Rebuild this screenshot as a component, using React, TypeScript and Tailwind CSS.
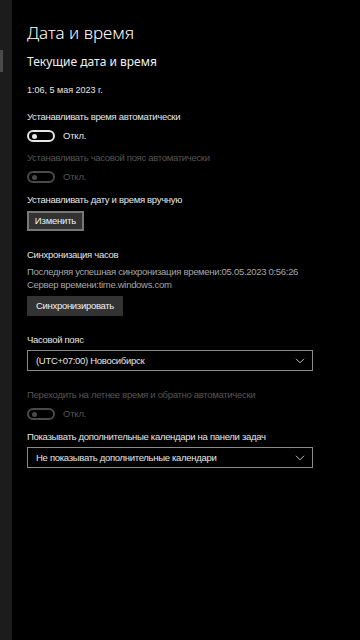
import React from "react";

const body = { fontFamily: '"Liberation Sans Narrow", "Liberation Sans", sans-serif' };
const head = { fontFamily: '"Noto Sans", "Open Sans", sans-serif' };

function Toggle({ disabled }: { disabled?: boolean }) {
  return (
    <div className="flex items-center gap-[8px] h-[14px]">
      <div
        className={
          "w-[28px] h-[12px] rounded-full border-[2px] flex items-center pl-[3px] " +
          (disabled ? "border-[#4a4a4a]" : "border-[#e6e6e6]")
        }
      >
        <div
          className={
            "w-[5px] h-[5px] rounded-full " +
            (disabled ? "bg-[#4a4a4a]" : "bg-[#e6e6e6]")
          }
        />
      </div>
      <span
        className={
          "text-[9.5px] leading-[14px] tracking-[-0.2px] " +
          (disabled ? "text-[#555555]" : "text-[#e6e6e6]")
        }
      >
        Откл.
      </span>
    </div>
  );
}

function Chevron() {
  return (
    <svg width="10" height="6" viewBox="0 0 10 6" fill="none">
      <path d="M1 0.8 L5 4.8 L9 0.8" stroke="#bdbdbd" strokeWidth="1" />
    </svg>
  );
}

function Select({ text }: { text: string }) {
  return (
    <div className="w-[286px] h-[21px] border border-[#8a8a8a] flex items-center justify-between pl-[8px] pr-[7px]">
      <span className="text-[9.5px] leading-[14px] tracking-[-0.3px] text-[#e6e6e6]">{text}</span>
      <Chevron />
    </div>
  );
}

function Label({ children, dim }: { children: React.ReactNode; dim?: boolean }) {
  return (
    <div
      className={
        "h-[14px] text-[9.5px] leading-[14px] tracking-[-0.3px] whitespace-nowrap " +
        (dim ? "text-[#555555]" : "text-[#e6e6e6]")
      }
    >
      {children}
    </div>
  );
}

export default function App() {
  return (
    <div className="w-[360px] h-[640px] bg-black flex overflow-hidden" style={body}>
      <div className="w-[12px] h-full bg-[#1c1c1c] relative shrink-0">
        <div className="absolute left-0 top-[50px] w-[3px] h-[22px] bg-[#4a4a4a]" />
      </div>
      <div className="flex-1 pl-[15px] pt-[20px] flex flex-col">
        <div className="h-[26px] text-[17px] leading-[26px] font-light text-white" style={head}>Дата и время</div>
        <div className="mt-[7px] h-[18px] text-[12px] leading-[18px] text-[#f0f0f0]" style={head}>Текущие дата и время</div>
        <div className="mt-[12px] h-[14px] text-[9px] leading-[14px] text-[#e6e6e6]">1:06, 5 мая 2023 г.</div>
        <div className="mt-[13px]"><Label>Устанавливать время автоматически</Label></div>
        <div className="mt-[5px]"><Toggle /></div>
        <div className="mt-[8px]"><Label dim>Устанавливать часовой пояс автоматически</Label></div>
        <div className="mt-[5px]"><Toggle disabled /></div>
        <div className="mt-[9px]"><Label>Устанавливать дату и время вручную</Label></div>
        <div className="mt-[4px] flex">
          <div className="h-[20px] w-[57px] bg-[#333333] border-[2px] border-[#777777] flex items-center justify-center text-[9.5px] tracking-[-0.2px] text-[#f0f0f0]">Изменить</div>
        </div>
        <div className="mt-[17px]"><Label>Синхронизация часов</Label></div>
        <div className="mt-[3px] h-[13px] text-[9.5px] leading-[13px] tracking-[-0.3px] text-[#a6a6a6] whitespace-nowrap">Последняя успешная синхронизация времени:05.05.2023 0:56:26</div>
        <div className="h-[13px] text-[9.5px] leading-[13px] tracking-[-0.3px] text-[#a6a6a6]">Сервер времени:time.windows.com</div>
        <div className="mt-[5px] flex">
          <div className="h-[20px] w-[96px] bg-[#333333] flex items-center justify-center text-[9.5px] tracking-[-0.3px] text-[#f0f0f0]">Синхронизировать</div>
        </div>
        <div className="mt-[17px]"><Label>Часовой пояс</Label></div>
        <div className="mt-[3px]"><Select text="(UTC+07:00) Новосибирск" /></div>
        <div className="mt-[17px]"><Label dim>Переходить на летнее время и обратно автоматически</Label></div>
        <div className="mt-[5px]"><Toggle disabled /></div>
        <div className="mt-[9px]"><Label>Показывать дополнительные календари на панели задач</Label></div>
        <div className="mt-[3px]"><Select text="Не показывать дополнительные календари" /></div>
      </div>
    </div>
  );
}
